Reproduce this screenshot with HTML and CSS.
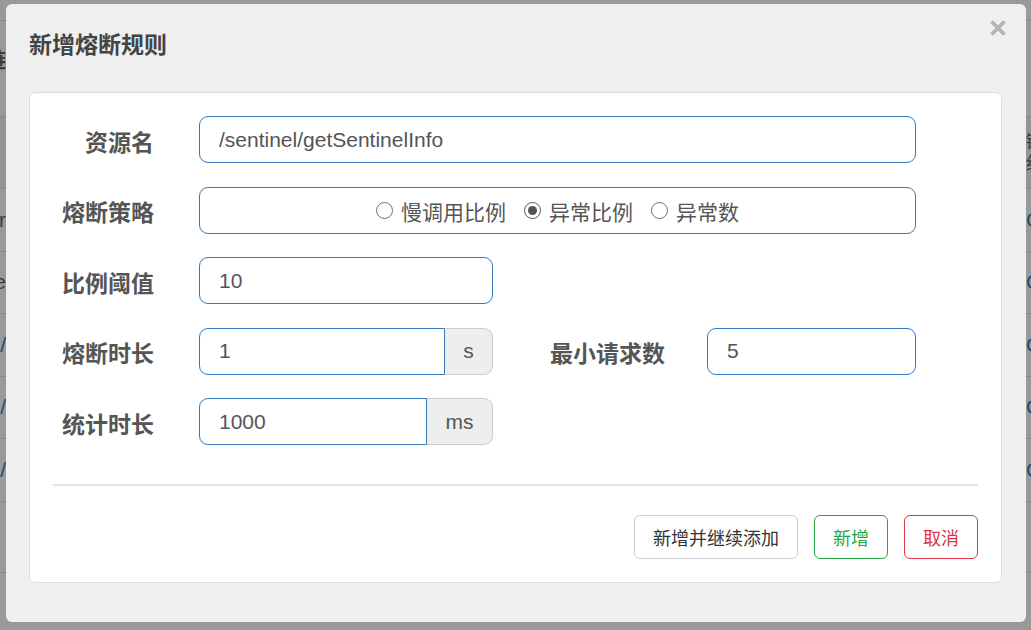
FILE: index.html
```html
<!DOCTYPE html>
<html lang="zh-CN">
<head>
<meta charset="utf-8">
<title>新增熔断规则</title>
<link rel="stylesheet" href="styles.css">
</head>
<body>
<div class="page">
  <div class="backdrop">
    <div class="bg-row bg-nav"><span class="bl"></span><span class="br"></span></div>
    <div class="bg-row bg-top"><span class="bl bold">规则链</span><span class="br"></span></div>
    <div class="bg-row bg-head"><span class="bl"></span><span class="br small">链路<br>统计</span></div>
    <div class="bg-row"><span class="bl">monitor</span><span class="br blue">Con</span></div>
    <div class="bg-row"><span class="bl">instance</span><span class="br blue">Con</span></div>
    <div class="bg-row"><span class="bl blue">/api/</span><span class="br blue">Con</span></div>
    <div class="bg-row"><span class="bl blue">/api/</span><span class="br blue">Con</span></div>
    <div class="bg-row"><span class="bl blue">/api/</span><span class="br blue">Con</span></div>
    <div class="bg-row bg-last"><span class="bl"></span><span class="br"></span></div>
  </div>

  <div class="modal">
    <div class="modal-header">
      <h4 class="modal-title">新增熔断规则</h4>
      <span class="close" aria-label="关闭">
        <svg width="18" height="18" viewBox="0 0 18 18"><path d="M2.5 2.5 L15.5 15.5 M15.5 2.5 L2.5 15.5" stroke="#b4b4b4" stroke-width="3.8" stroke-linecap="butt" fill="none"/></svg>
      </span>
    </div>
    <div class="card">
      <div class="form">
        <div class="row">
          <label class="lbl">资源名</label>
          <input class="field w-full" type="text" value="/sentinel/getSentinelInfo">
        </div>
        <div class="row">
          <label class="lbl">熔断策略</label>
          <div class="field radio-box w-full">
            <span class="radio"><span class="dot"></span>慢调用比例</span>
            <span class="radio"><span class="dot checked"></span>异常比例</span>
            <span class="radio"><span class="dot"></span>异常数</span>
          </div>
        </div>
        <div class="row">
          <label class="lbl">比例阈值</label>
          <input class="field w-short" type="text" value="10">
        </div>
        <div class="row">
          <label class="lbl">熔断时长</label>
          <div class="group">
            <input class="field" type="text" value="1">
            <span class="addon">s</span>
          </div>
          <label class="lbl lbl2">最小请求数</label>
          <input class="field w-min" type="text" value="5">
        </div>
        <div class="row">
          <label class="lbl">统计时长</label>
          <div class="group">
            <input class="field" type="text" value="1000">
            <span class="addon addon-ms">ms</span>
          </div>
        </div>
      </div>
      <hr class="divider">
      <div class="actions">
        <button class="btn">新增并继续添加</button>
        <button class="btn btn-green">新增</button>
        <button class="btn btn-red">取消</button>
      </div>
    </div>
  </div>
</div>
</body>
</html>
```

FILE: styles.css
```css
* { box-sizing: border-box; }

body {
  margin: 0;
  width: 1031px;
  height: 630px;
  overflow: hidden;
  background: #999;
  font-family: "Liberation Sans", "Noto Sans CJK SC", sans-serif;
}

.page {
  position: relative;
  width: 1031px;
  height: 630px;
  padding: 4px 5px 0 6px;
}

/* dimmed page behind the dialog */
.backdrop {
  position: absolute;
  inset: 0;
  z-index: 0;
  display: flex;
  flex-direction: column;
}

.bg-row {
  display: flex;
  justify-content: space-between;
  align-items: center;
  height: 62.5px;
  border-bottom: 1px solid #888;
  font-size: 21px;
  color: #3c3c3c;
}

.bg-nav { height: 21px; }
.bg-top { height: 96px; align-items: flex-start; padding-top: 22px; }
.bg-head { height: 72px; background: #939393; }
.bg-last { height: 71px; }

.bl {
  width: 6px;
  overflow: hidden;
  display: flex;
  justify-content: flex-end;
  white-space: nowrap;
}

.br {
  width: 5px;
  overflow: hidden;
  white-space: nowrap;
}

.bold { font-weight: bold; }
.small { font-size: 18px; line-height: 22px; }
.blue { color: #224a6c; }

/* dialog */
.modal {
  position: relative;
  z-index: 1;
  height: 618px;
  background: #efefef;
  border-radius: 6px;
  padding: 0 24px 0 23px;
}

.modal-header {
  height: 88px;
  padding-top: 24px;
}

.modal-title {
  margin: 0;
  font-size: 23px;
  line-height: 34px;
  font-weight: bold;
  color: #444;
}

.close {
  position: absolute;
  top: 15px;
  right: 19px;
  width: 18px;
  height: 18px;
  display: block;
}

.close svg { display: block; }

.card {
  background: #fff;
  border: 1px solid #ddd;
  border-radius: 6px;
  padding: 23px;
  height: 491px;
}

.row {
  display: flex;
  align-items: center;
  height: 47px;
  margin-bottom: 23.5px;
}

.row:last-child { margin-bottom: 0; }

.lbl {
  flex: none;
  width: 101px;
  margin-right: 45px;
  text-align: right;
  font-size: 23px;
  font-weight: bold;
  color: #555;
  white-space: nowrap;
  padding-top: 2px;
}

.lbl2 {
  width: 172px;
  margin-right: 42px;
}

.field {
  height: 47px;
  border: 1px solid #337ab7;
  border-radius: 9px;
  padding: 0 19px;
  font-family: "Liberation Sans", "Noto Sans CJK SC", sans-serif;
  font-size: 21px;
  color: #555;
  background: #fff;
  outline: none;
  margin: 0;
}

.w-full { width: 717px; }
.w-short { width: 294px; }
.w-min { width: 209px; }

.radio-box {
  display: flex;
  align-items: center;
  justify-content: center;
  gap: 18px;
  padding: 2px 0 0;
}

.radio {
  display: inline-flex;
  align-items: center;
  gap: 8px;
  white-space: nowrap;
}

.dot {
  flex: none;
  width: 17px;
  height: 17px;
  margin-top: -2px;
  border: 1.4px solid #707070;
  border-radius: 50%;
  background: #fff;
  display: inline-flex;
  align-items: center;
  justify-content: center;
}

.dot.checked {
  border-color: #555;
}

.dot.checked::after {
  content: "";
  width: 9px;
  height: 9px;
  border-radius: 50%;
  background: #555;
}

.group {
  display: flex;
  width: 294px;
  flex: none;
}

.group .field {
  flex: 1;
  min-width: 0;
  border-radius: 9px 0 0 9px;
}

.addon {
  flex: none;
  width: 48px;
  height: 47px;
  border: 1px solid #ccc;
  border-left: 0;
  border-radius: 0 9px 9px 0;
  background: #eee;
  display: flex;
  align-items: center;
  justify-content: center;
  font-size: 21px;
  color: #555;
}

.addon-ms { width: 66px; }

.divider {
  margin: 39px 0 0;
  border: 0;
  border-top: 2px solid #e3e3e3;
  height: 0;
}

.actions {
  display: flex;
  justify-content: flex-end;
  gap: 16px;
  margin-top: 29px;
}

.btn {
  height: 44px;
  padding: 0 18px;
  font-family: "Liberation Sans", "Noto Sans CJK SC", sans-serif;
  font-size: 18px;
  border-radius: 6px;
  background: #fff;
  border: 1px solid #ccc;
  color: #333;
  cursor: pointer;
}

.btn-green {
  border-color: #28a745;
  color: #28a745;
}

.btn-red {
  border-color: #dc3545;
  color: #dc3545;
}
```
